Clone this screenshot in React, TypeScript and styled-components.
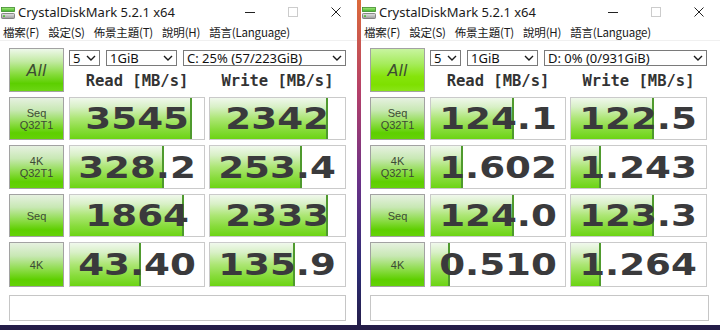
import React from "react";
import styled, { createGlobalStyle } from "styled-components";

const Global = createGlobalStyle`
  html, body { margin: 0; padding: 0; }
  body {
    width: 720px;
    height: 330px;
    overflow: hidden;
    background: linear-gradient(180deg, #dc6a3a 0%, #b4406a 28%, #6a3288 55%, #2c2c74 82%, #241c46 100%);
  }
`;

const Desktop = styled.div`
  display: flex;
  gap: 4px;
  width: 720px;
  height: 330px;
  align-items: flex-start;
`;

const Win = styled.div<{ $w: number }>`
  width: ${(p) => p.$w}px;
  height: 325px;
  flex-shrink: 0;
  background: #ffffff;
  display: flex;
  flex-direction: column;
  overflow: hidden;
`;

const TitleBar = styled.div`
  height: 24px;
  display: flex;
  align-items: center;
  padding-left: 1px;
`;

const TitleText = styled.span`
  margin-left: 3px;
  font-family: "Noto Sans", "Open Sans", sans-serif;
  font-size: 13px;
  color: #1a1a1a;
  flex: 1;
  white-space: nowrap;
`;

const Caption = styled.div`
  display: flex;
  height: 24px;
`;

const CapBtn = styled.div`
  width: 43px;
  height: 24px;
  display: flex;
  align-items: center;
  justify-content: center;
`;

const MenuBar = styled.div`
  height: 16px;
  display: flex;
  align-items: center;
  gap: 9px;
  padding-left: 3px;
  border-bottom: 1px solid #f0f0f0;
`;

const MenuItem = styled.span`
  font-family: "Noto Sans CJK TC", "Noto Sans", sans-serif;
  font-size: 11.5px;
  letter-spacing: -0.2px;
  color: #1a1a1a;
  white-space: nowrap;
  line-height: 16px;
`;

const Client = styled.div`
  padding: 7px 11px 0 9px;
  display: flex;
  flex-direction: column;
`;

const Grid = styled.div`
  display: grid;
  grid-template-columns: 56px 136px 137px;
  grid-template-rows: 44px 43px 44px 43px 45px;
  column-gap: 4px;
  row-gap: 5px;
`;

const greenBtn = `
  border: 1px solid #a2a2a2;
  box-sizing: border-box;
  display: flex;
  flex-direction: column;
  align-items: center;
  justify-content: center;
`;

const AllBtn = styled.div<{ $hot?: boolean }>`
  ${greenBtn}
  width: 55px;
  background: ${(p) =>
    p.$hot
      ? "linear-gradient(180deg, #c8f4a0 0%, #a6ec5c 35%, #86e40c 65%, #7ee000 85%, #8ae418 100%)"
      : "linear-gradient(180deg, #eef8ea 0%, #c2eaa2 30%, #86dc3c 60%, #5ccf00 82%, #6cd614 100%)"};
  font-family: "DejaVu Sans", sans-serif;
  font-style: italic;
  font-size: 16px;
  color: #3d4d32;
`;

const LabelBtn = styled.div`
  ${greenBtn}
  width: 55px;
  background: linear-gradient(180deg, #e6f1e0 0%, #c8e8b4 30%, #8cdc48 62%, #5ecf00 85%, #64d208 100%);
  font-family: "Liberation Sans", sans-serif;
  font-size: 11px;
  line-height: 12px;
  color: #3c4a34;
`;

const TopArea = styled.div`
  grid-column: 2 / 4;
  display: flex;
  flex-direction: column;
`;

const Combos = styled.div`
  margin-top: 2px;
  display: flex;
  gap: 6px;
`;

const Combo = styled.div<{ $w: number }>`
  width: ${(p) => p.$w}px;
  height: 16px;
  box-sizing: border-box;
  border: 1px solid #7a7a7a;
  background: #fff;
  display: flex;
  align-items: center;
  padding: 0 3px 0 3px;
  font-family: "Noto Sans", "Open Sans", sans-serif;
  font-size: 13px;
  color: #111;
`;

const ComboText = styled.span`
  flex: 1;
  white-space: nowrap;
  line-height: 14px;
`;

const Heads = styled.div`
  flex: 1;
  display: grid;
  grid-template-columns: 136px 137px;
  column-gap: 4px;
  align-items: center;
`;

const Head = styled.div`
  text-align: center;
  font-family: "DejaVu Sans Mono", monospace;
  font-weight: bold;
  font-size: 15.5px;
  color: #333;
  padding-top: 3px;
  white-space: nowrap;
`;

const Cell = styled.div`
  position: relative;
  box-sizing: border-box;
  border: 1px solid #cacaca;
  background: #fff;
  overflow: hidden;
  display: flex;
  align-items: center;
  justify-content: center;
`;

const Fill = styled.div`
  position: absolute;
  left: 0;
  top: 0;
  bottom: 0;
  box-sizing: border-box;
  border-right: 2px solid #4f9a2e;
  background: linear-gradient(180deg, #f0f8ec 0%, #d8f0c6 22%, #ace674 50%, #88dc3c 76%, #6cd414 100%);
`;

const Score = styled.span`
  position: relative;
  font-family: "DejaVu Sans", sans-serif;
  font-weight: bold;
  font-size: 31px;
  line-height: 1;
  color: #3a3a3c;
  transform: scaleX(1.2);
  white-space: nowrap;
`;

const Status = styled.div`
  margin-top: 8px;
  height: 26px;
  box-sizing: border-box;
  border: 1px solid #c6c6c6;
  background: #fff;
`;

const Icon = () => (
  <svg width="14" height="14" viewBox="0 0 14 14">
    <defs>
      <linearGradient id="ig" x1="0" y1="0" x2="0" y2="1">
        <stop offset="0" stopColor="#a6ec7a" />
        <stop offset="1" stopColor="#3fae2a" />
      </linearGradient>
      <linearGradient id="id" x1="0" y1="0" x2="0" y2="1">
        <stop offset="0" stopColor="#e4e4e4" />
        <stop offset="1" stopColor="#9a9a9a" />
      </linearGradient>
    </defs>
    <rect x="0.5" y="2.5" width="13" height="4" fill="url(#ig)" stroke="#3c8a2a" strokeWidth="0.8" />
    <rect x="0.5" y="8.5" width="13" height="5" rx="0.8" fill="url(#id)" stroke="#707070" strokeWidth="0.8" />
    <rect x="2" y="10.3" width="2" height="1.6" fill="#48c030" />
  </svg>
);

const Chevron = () => (
  <svg width="10" height="6" viewBox="0 0 10 6">
    <polyline points="1,1 5,5 9,1" fill="none" stroke="#1a1a1a" strokeWidth="1.4" />
  </svg>
);

const labels: string[][] = [["Seq", "Q32T1"], ["4K", "Q32T1"], ["Seq"], ["4K"]];

const ratio = (s: string) => {
  const v = parseFloat(s);
  if (v <= 0) return 0;
  return Math.max(0, Math.min(1, Math.log10(v * 10) / 5));
};

type WinProps = {
  width: number;
  drive: string;
  scores: string[][];
  hot?: boolean;
};

const DiskWindow: React.FC<WinProps> = ({ width, drive, scores, hot }) => (
  <Win $w={width}>
    <TitleBar>
      <Icon />
      <TitleText>CrystalDiskMark 5.2.1 x64</TitleText>
      <Caption>
        <CapBtn>
          <svg width="10" height="10" viewBox="0 0 10 10">
            <line x1="0" y1="5.5" x2="10" y2="5.5" stroke="#222" strokeWidth="1" />
          </svg>
        </CapBtn>
        <CapBtn>
          <svg width="10" height="10" viewBox="0 0 10 10">
            <rect x="0.5" y="0.5" width="9" height="9" fill="none" stroke="#cccccc" strokeWidth="1" />
          </svg>
        </CapBtn>
        <CapBtn>
          <svg width="10" height="10" viewBox="0 0 10 10">
            <line x1="0.5" y1="0.5" x2="9.5" y2="9.5" stroke="#222" strokeWidth="1" />
            <line x1="9.5" y1="0.5" x2="0.5" y2="9.5" stroke="#222" strokeWidth="1" />
          </svg>
        </CapBtn>
      </Caption>
    </TitleBar>
    <MenuBar>
      <MenuItem>檔案(F)</MenuItem>
      <MenuItem>設定(S)</MenuItem>
      <MenuItem>佈景主題(T)</MenuItem>
      <MenuItem>說明(H)</MenuItem>
      <MenuItem>語言(Language)</MenuItem>
    </MenuBar>
    <Client>
      <Grid>
        <AllBtn $hot={hot}>All</AllBtn>
        <TopArea>
          <Combos>
            <Combo $w={31}>
              <ComboText>5</ComboText>
              <Chevron />
            </Combo>
            <Combo $w={71}>
              <ComboText>1GiB</ComboText>
              <Chevron />
            </Combo>
            <Combo $w={163}>
              <ComboText>{drive}</ComboText>
              <Chevron />
            </Combo>
          </Combos>
          <Heads>
            <Head>Read [MB/s]</Head>
            <Head>Write [MB/s]</Head>
          </Heads>
        </TopArea>
        {scores.map((row, i) => (
          <React.Fragment key={i}>
            <LabelBtn>
              {labels[i].map((l) => (
                <span key={l}>{l}</span>
              ))}
            </LabelBtn>
            {row.map((s, j) => (
              <Cell key={j}>
                <Fill style={{ width: `${(ratio(s) * 100).toFixed(1)}%` }} />
                <Score>{s}</Score>
              </Cell>
            ))}
          </React.Fragment>
        ))}
      </Grid>
      <Status />
    </Client>
  </Win>
);

export default function App() {
  return (
    <>
      <Global />
      <Desktop>
        <DiskWindow
          width={357}
          drive="C: 25% (57/223GiB)"
          scores={[
            ["3545", "2342"],
            ["328.2", "253.4"],
            ["1864", "2333"],
            ["43.40", "135.9"],
          ]}
        />
        <DiskWindow
          width={359}
          hot
          drive="D: 0% (0/931GiB)"
          scores={[
            ["124.1", "122.5"],
            ["1.602", "1.243"],
            ["124.0", "123.3"],
            ["0.510", "1.264"],
          ]}
        />
      </Desktop>
    </>
  );
}
